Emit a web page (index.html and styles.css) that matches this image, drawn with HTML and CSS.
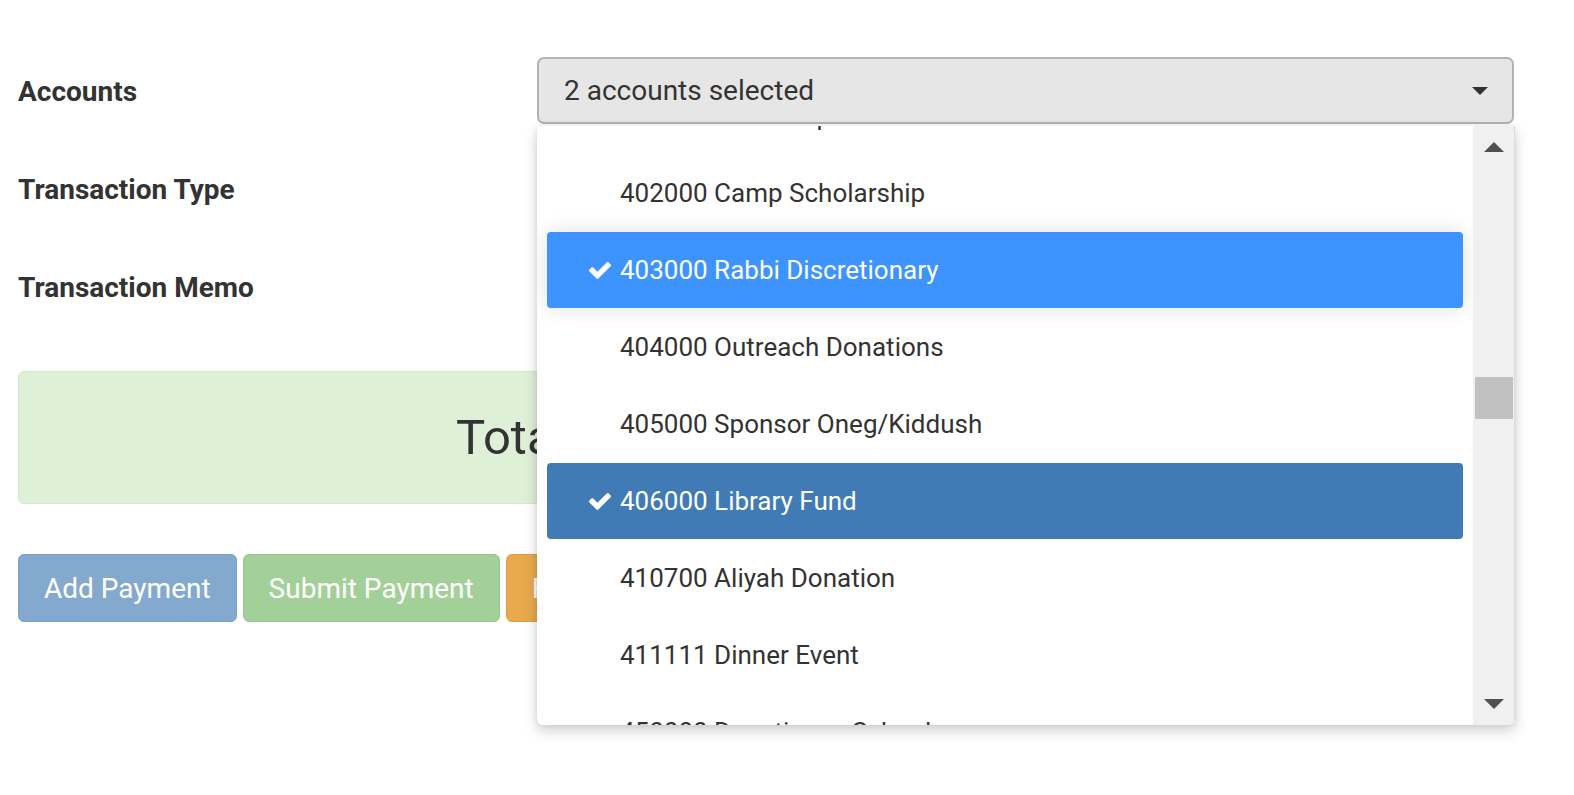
FILE: index.html
```html
<!DOCTYPE html>
<html lang="en">
<head>
<meta charset="utf-8">
<title>Payment</title>
<link rel="stylesheet" href="styles.css">
</head>
<body>
<div class="page">
  <form class="form">
    <div class="row">
      <label class="label">Accounts</label>
      <div class="control">
        <div class="picker">
          <button type="button" class="select">
            <span class="select-text">2 accounts selected</span>
            <span class="caret"></span>
          </button>
          <div class="menu">
            <div class="menu-list">
              <ul class="options">
                <li class="option"><span class="check"></span><span>401000 Youth Trip</span></li>
                <li class="option"><span class="check"></span><span>402000 Camp Scholarship</span></li>
                <li class="option option-active"><span class="check"><svg viewBox="121 334 1550 1188" width="22" height="17"><path fill="#fff" d="M1671 566q0 40-28 68l-724 724-136 136q-28 28-68 28t-68-28l-136-136-362-362q-28-28-28-68t28-68l136-136q28-28 68-28t68 28l294 295 656-657q28-28 68-28t68 28l136 136q28 28 28 68z"/></svg></span><span>403000 Rabbi Discretionary</span></li>
                <li class="option"><span class="check"></span><span>404000 Outreach Donations</span></li>
                <li class="option"><span class="check"></span><span>405000 Sponsor Oneg/Kiddush</span></li>
                <li class="option option-selected"><span class="check"><svg viewBox="121 334 1550 1188" width="22" height="17"><path fill="#fff" d="M1671 566q0 40-28 68l-724 724-136 136q-28 28-68 28t-68-28l-136-136-362-362q-28-28-28-68t28-68l136-136q28-28 68-28t68 28l294 295 656-657q28-28 68-28t68 28l136 136q28 28 28 68z"/></svg></span><span>406000 Library Fund</span></li>
                <li class="option"><span class="check"></span><span>410700 Aliyah Donation</span></li>
                <li class="option"><span class="check"></span><span>411111 Dinner Event</span></li>
                <li class="option"><span class="check"></span><span>450000 Donations - School</span></li>
              </ul>
            </div>
            <div class="scrollbar">
              <span class="sb-btn"><span class="arrow-up"></span></span>
              <div class="track"><div class="thumb"></div></div>
              <span class="sb-btn"><span class="arrow-down"></span></span>
            </div>
          </div>
        </div>
      </div>
    </div>
    <div class="row">
      <label class="label">Transaction Type</label>
      <div class="control"><div class="input"></div></div>
    </div>
    <div class="row">
      <label class="label">Transaction Memo</label>
      <div class="control"><div class="input"></div></div>
    </div>
    <div class="total">Total Payments: $12,500.00</div>
    <div class="actions">
      <button type="button" class="btn btn-blue">Add Payment</button>
      <button type="button" class="btn btn-green">Submit Payment</button>
      <button type="button" class="btn btn-orange">Reset</button>
    </div>
  </form>
</div>
</body>
</html>
```
FILE: styles.css
```css
* { box-sizing: border-box; }
html, body { margin: 0; padding: 0; background: #fff; }
html { min-height: 795px; }
body {
  min-height: 795px;
  font-family: Roboto, "Liberation Sans", Arial, sans-serif;
  color: #333;
}
.page { padding: 57px 60px 0 18px; min-height: 795px; }
.form { display: flex; flex-direction: column; }
.row {
  display: grid;
  grid-template-columns: 519px 1fr;
  align-items: center;
  height: 67px;
  margin-bottom: 31px;
}
.label {
  font-size: 28px;
  font-weight: 700;
  color: #333;
  padding-top: 2px;
}
.control { height: 67px; }
.picker { position: relative; height: 67px; z-index: 5; }
.select {
  display: flex;
  align-items: center;
  justify-content: space-between;
  width: 100%;
  height: 67px;
  padding: 0 24px 0 25px;
  background: #e6e6e6;
  border: 2px solid #b3b3b3;
  border-radius: 7px;
  font-family: inherit;
  font-size: 28px;
  color: #333;
  text-align: left;
}
.caret {
  width: 0; height: 0;
  border-left: 8px solid transparent;
  border-right: 8px solid transparent;
  border-top: 8px solid #333;
}
.input {
  height: 67px;
  border: 2px solid #ccc;
  border-radius: 7px;
  background: #fff;
}
.menu {
  position: absolute;
  top: calc(100% + 2px);
  left: 0;
  right: -1px;
  height: 599px;
  display: flex;
  background: #fff;
  border-radius: 0 0 6px 6px;
  box-shadow: 0 6px 14px rgba(0,0,0,0.18), 0 0 6px rgba(0,0,0,0.08);
  overflow: hidden;
}
.menu-list {
  flex: 1;
  overflow: hidden;
  padding: 0 10px;
}
.options {
  list-style: none;
  margin: -48px 0 0 0;
  padding: 0;
}
.option {
  display: flex;
  align-items: center;
  height: 76px;
  margin-bottom: 1px;
  padding-left: 42px;
  border-radius: 4px;
  font-size: 26px;
  color: #333;
  white-space: nowrap;
}
.check {
  display: inline-flex;
  align-items: center;
  width: 31px;
  height: 17px;
}
.option-active {
  background: #3d94fe;
  color: #fff;
  box-shadow: 0 0 20px rgba(0,0,0,0.13);
  position: relative;
}
.option-selected {
  background: #417bb5;
  color: #fff;
}
.scrollbar {
  width: 42px;
  display: flex;
  flex-direction: column;
  background: #f0f0f0;
  border-right: 1px solid #dcdcdc;
}
.sb-btn {
  height: 42px;
  display: flex;
  align-items: center;
  justify-content: center;
}
.arrow-up {
  width: 0; height: 0;
  border-left: 10px solid transparent;
  border-right: 10px solid transparent;
  border-bottom: 10px solid #505050;
}
.arrow-down {
  width: 0; height: 0;
  border-left: 10px solid transparent;
  border-right: 10px solid transparent;
  border-top: 10px solid #505050;
}
.track { flex: 1; }
.thumb {
  margin: 209px 1px 0 2px;
  height: 42px;
  background: #c1c1c1;
}
.total {
  margin-top: 20px;
  height: 133px;
  display: flex;
  align-items: center;
  justify-content: center;
  padding-right: 14px;
  background: #dff0d8;
  border: 1px solid #d6e9c6;
  border-radius: 6px;
  font-size: 49px;
  color: #333;
}
.actions {
  display: flex;
  gap: 6px;
  margin-top: 50px;
}
.btn {
  height: 68px;
  padding: 0 25px;
  border-radius: 6px;
  border: 1px solid transparent;
  font-family: inherit;
  font-size: 28px;
  color: #fff;
}
.btn-blue { background: #84a9cf; border-color: #7b9fc6; }
.btn-green { background: #a3d098; border-color: #98c78c; }
.btn-orange { background: #e8a94d; border-color: #dfa043; }
```
